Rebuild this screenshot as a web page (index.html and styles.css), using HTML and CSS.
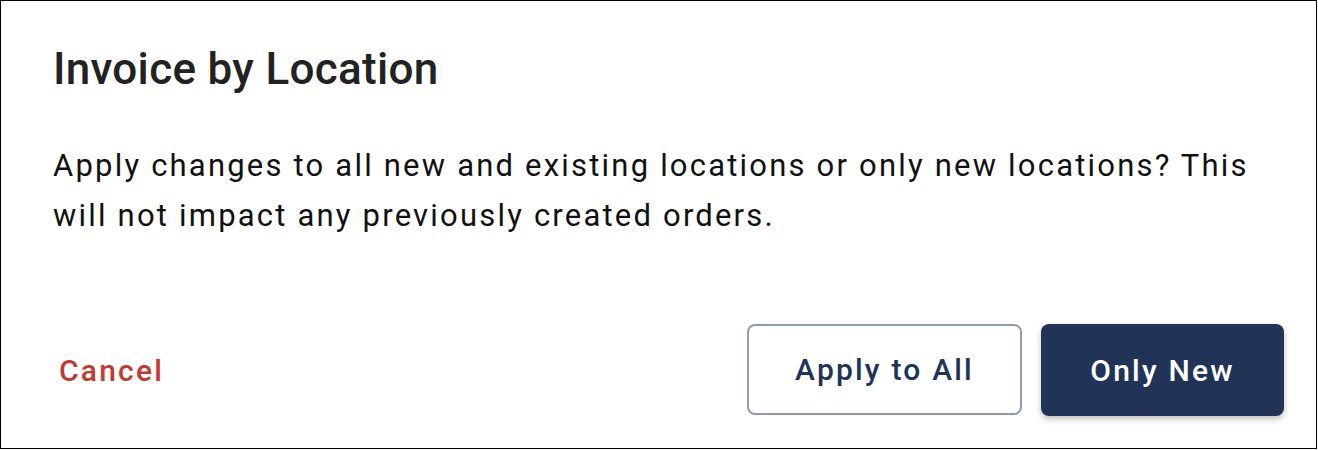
FILE: index.html
```html
<!DOCTYPE html>
<html lang="en">
<head>
    <meta charset="UTF-8">
    <meta name="viewport" content="width=device-width, initial-scale=1.0">
    <title>Invoice by Location</title>
    <link rel="stylesheet" href="styles.css">
</head>
<body>
    <div class="dialog">
        <h2 class="dialog-title">Invoice by Location</h2>
        <p class="dialog-text">Apply changes to all new and existing locations or only new locations? This will not impact any previously created orders.</p>
        <div class="dialog-actions">
            <button class="btn btn-link">Cancel</button>
            <div class="actions-right">
                <button class="btn btn-outline">Apply to All</button>
                <button class="btn btn-primary">Only New</button>
            </div>
        </div>
    </div>
</body>
</html>
```

FILE: styles.css
```css
html, body {
    margin: 0;
    padding: 0;
    background-color: #fff;
}
body {
    font-family: Roboto, "Noto Sans", Arial, sans-serif;
    color: #111;
}
.dialog {
    box-sizing: border-box;
    width: 1317px;
    height: 449px;
    border: 1px solid #000;
    padding: 42px 32px 0 52px;
}
.dialog-title {
    margin: 0;
    font-size: 44px;
    font-weight: 500;
    line-height: 52px;
    letter-spacing: 0.3px;
    color: #222;
}
.dialog-text {
    margin: 46px 0 0;
    font-size: 31px;
    line-height: 50px;
    letter-spacing: 2.2px;
    color: #111;
    max-width: 1220px;
}
.dialog-actions {
    display: flex;
    justify-content: space-between;
    align-items: center;
    margin-top: 83px;
}
.actions-right {
    display: flex;
    gap: 19px;
}
.btn {
    font-family: inherit;
    font-size: 30px;
    font-weight: 500;
    letter-spacing: 2.2px;
    border-radius: 8px;
    cursor: pointer;
}
.btn-link {
    background: none;
    border: none;
    padding: 0 6px;
    color: #c23a33;
}
.btn-outline {
    width: 275px;
    height: 91px;
    background-color: #fff;
    border: 2px solid #8e9bb0;
    color: #213457;
}
.btn-primary {
    width: 243px;
    height: 92px;
    background-color: #213457;
    border: none;
    color: #fff;
    box-shadow: 0 3px 6px rgba(0, 0, 0, 0.25);
}
```
